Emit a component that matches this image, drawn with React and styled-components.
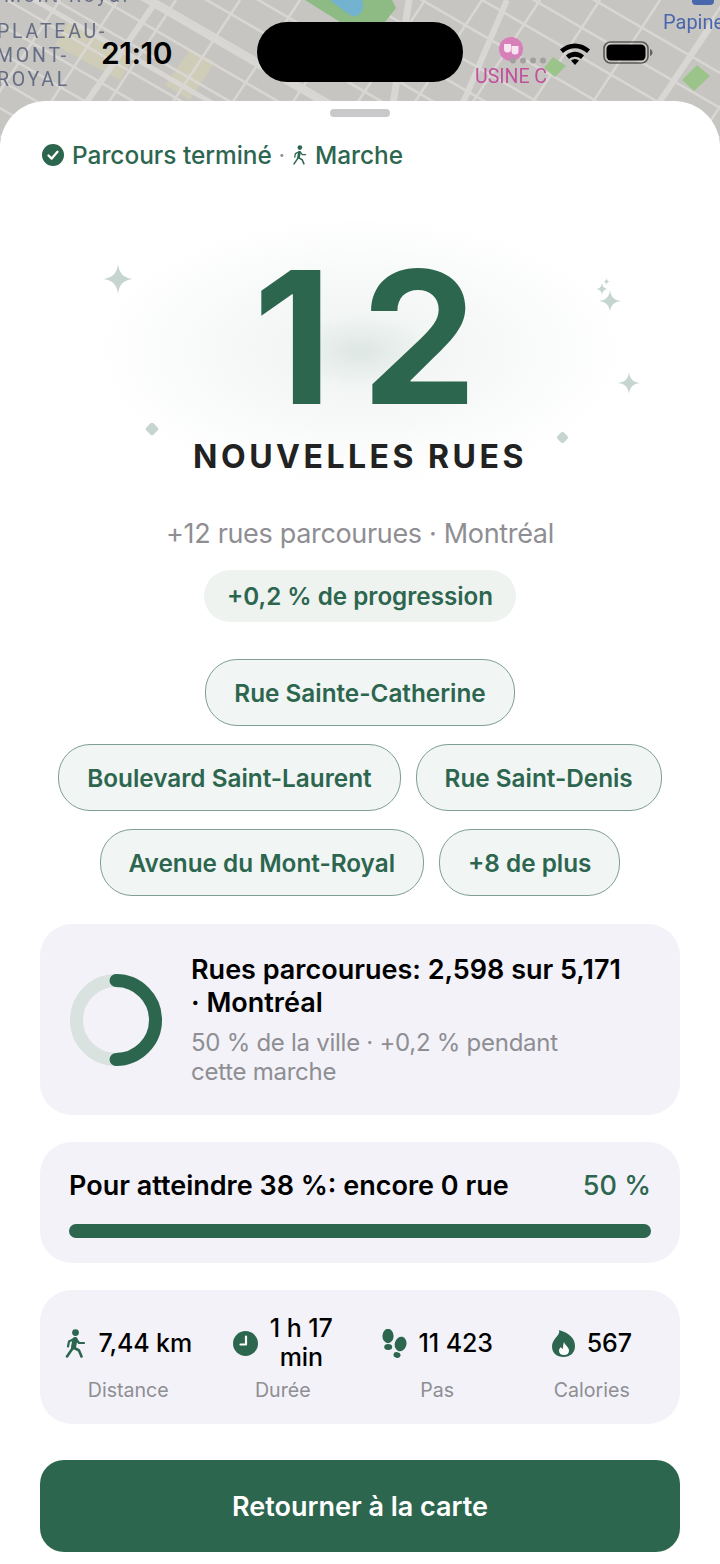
import React from "react";
import styled, { createGlobalStyle } from "styled-components";

const GREEN = "#2d664f";
const GREY = "#8e8e93";
const SPARK = "#c6d5cf";

const Global = createGlobalStyle`
  html, body {
    margin: 0;
    padding: 0;
    background: #fff;
  }
  * {
    box-sizing: border-box;
  }
`;

const Page = styled.div`
  position: relative;
  width: 720px;
  height: 1564px;
  overflow: hidden;
  font-family: Inter, "Noto Sans", sans-serif;
  background: #fff;
`;

const MapLayer = styled.svg`
  position: absolute;
  top: 0;
  left: 0;
  width: 720px;
  height: 190px;
  filter: blur(0.6px);
`;

const Island = styled.div`
  position: absolute;
  top: 22px;
  left: 257px;
  width: 206px;
  height: 60px;
  border-radius: 30px;
  background: #000;
`;

const Clock = styled.div`
  position: absolute;
  top: 35px;
  left: 101px;
  font-size: 30px;
  line-height: 36px;
  font-weight: 600;
  letter-spacing: -0.5px;
  color: #000;
`;

const StatusIcon = styled.svg`
  position: absolute;
  top: ${(p) => p.$top}px;
  left: ${(p) => p.$left}px;
`;

const Sheet = styled.div`
  position: relative;
  margin-top: 101px;
  height: 1463px;
  padding: 8px 40px 0;
  display: flex;
  flex-direction: column;
  border-radius: 46px 46px 0 0;
  background: #fff;
`;

const Handle = styled.div`
  align-self: center;
  width: 60px;
  height: 8px;
  border-radius: 4px;
  background: #c9c9cc;
`;

const Status = styled.div`
  display: flex;
  align-items: center;
  margin-top: 23px;
  height: 30px;
  padding-left: 2px;
  gap: 8px;
  font-size: 24.4px;
  font-weight: 550;
  color: ${GREEN};
`;

const Dot = styled.span`
  color: ${GREY};
  font-size: 20px;
  margin: 0 -1px;
`;

const Hero = styled.div`
  position: relative;
  margin-top: 75px;
  display: flex;
  flex-direction: column;
  align-items: center;
`;

const Glow = styled.div`
  position: absolute;
  top: -29px;
  left: 55px;
  width: 530px;
  height: 270px;
  background: radial-gradient(
    ellipse closest-side,
    rgba(45, 102, 79, 0.16) 0%,
    rgba(45, 102, 79, 0.06) 28%,
    rgba(45, 102, 79, 0.03) 62%,
    rgba(45, 102, 79, 0) 100%
  );
`;

const Spark = styled.svg`
  position: absolute;
  top: ${(p) => p.$top}px;
  left: ${(p) => p.$left}px;
`;

const Diamond = styled.div`
  position: absolute;
  top: ${(p) => p.$top}px;
  left: ${(p) => p.$left}px;
  width: ${(p) => p.$size}px;
  height: ${(p) => p.$size}px;
  border-radius: 2px;
  transform: rotate(45deg);
  background: ${SPARK};
`;

const BigNumber = styled.div`
  position: relative;
  margin-left: 39px;
  font-size: 184px;
  line-height: 184px;
  font-weight: 700;
  letter-spacing: 29px;
  color: ${GREEN};
`;

const BigLabel = styled.div`
  position: relative;
  margin-top: 8px;
  font-size: 32px;
  line-height: 40px;
  font-weight: 700;
  letter-spacing: 3.5px;
  color: #222;
`;

const Subline = styled.div`
  margin-top: 40px;
  text-align: center;
  font-size: 27px;
  line-height: 34px;
  letter-spacing: -0.33px;
  color: ${GREY};
`;

const Progress = styled.div`
  align-self: center;
  margin-top: 19px;
  height: 52px;
  padding: 0 23px;
  display: flex;
  align-items: center;
  border-radius: 26px;
  font-size: 24.2px;
  font-weight: 600;
  color: ${GREEN};
  background: #eef3f0;
`;

const Chips = styled.div`
  margin-top: 37px;
  display: flex;
  flex-wrap: wrap;
  justify-content: center;
  gap: 18px 15px;
`;

const Chip = styled.div`
  height: 67px;
  padding: 0 28px;
  display: flex;
  align-items: center;
  border: 1.5px solid #7f9f90;
  border-radius: 32px;
  font-size: 24.3px;
  font-weight: 580;
  color: ${GREEN};
  background: #f1f5f3;
`;

const Card = styled.div`
  border-radius: 32px;
  background: #f2f2f8;
`;

const CityCard = styled(Card)`
  margin-top: 28px;
  height: 191px;
  padding: 0 50px 0 30px;
  display: flex;
  align-items: center;
  gap: 29px;
`;

const Ring = styled.svg`
  flex-shrink: 0;
`;

const CityTitle = styled.div`
  font-size: 27px;
  line-height: 33px;
  font-weight: 600;
  color: #000;
`;

const CitySub = styled.div`
  margin-top: 9px;
  max-width: 400px;
  font-size: 24px;
  line-height: 29px;
  letter-spacing: -0.27px;
  color: ${GREY};
`;

const GoalCard = styled(Card)`
  margin-top: 27px;
  height: 121px;
  padding: 26px 29px 0;
`;

const GoalRow = styled.div`
  display: flex;
  justify-content: space-between;
  align-items: center;
  height: 34px;
`;

const GoalText = styled.div`
  font-size: 27px;
  font-weight: 600;
  color: #000;
`;

const GoalValue = styled.div`
  font-size: 27px;
  font-weight: 500;
  color: ${GREEN};
`;

const Bar = styled.div`
  margin-top: 22px;
  height: 14px;
  border-radius: 7px;
  background: ${GREEN};
`;

const StatsCard = styled(Card)`
  margin-top: 27px;
  height: 134px;
  padding: 24px 11px 0;
  display: grid;
  grid-template-columns: repeat(4, 1fr);
`;

const Stat = styled.div`
  display: flex;
  flex-direction: column;
  align-items: center;
`;

const StatValue = styled.div`
  height: 58px;
  display: flex;
  align-items: center;
  gap: 12px;
`;

const StatText = styled.div`
  font-size: 25px;
  line-height: 29px;
  font-weight: 550;
  letter-spacing: -0.1px;
  text-align: center;
  white-space: pre-line;
  color: #000;
`;

const StatIcon = styled.svg`
  flex-shrink: 0;
`;

const StatLabel = styled.div`
  margin-top: 5px;
  font-size: 19.6px;
  line-height: 26px;
  color: ${GREY};
`;

const ReturnButton = styled.button`
  margin-top: 36px;
  height: 92px;
  border: none;
  border-radius: 24px;
  font-family: inherit;
  font-size: 27px;
  font-weight: 600;
  color: #fff;
  background: ${GREEN};
`;

// street grid for the map behind the sheet
const minorA = [-130, -100, -72, -44, -16, 12, 40, 68, 96, 124, 152, -160, -190, -220, -250, -285, -320, -350, -385];
const minorB = [60, 118, 176, 240, 300, 360, 425, 482, 540, 600, 660, 725, 790, 850];
const STREET = "#d9d7d3";

const MapBack = () => (
  <MapLayer viewBox="0 0 720 190">
    <rect width="720" height="190" fill="#c7c5c1" />
    <polygon points="70,20 135,55 120,80 55,45" fill="#cfcdb8" />
    <polygon points="190,50 215,62 190,100 165,85" fill="#cfcdb8" />
    {minorA.map((c) => (
      <line key={c} x1="0" y1={c + 40} x2="720" y2={c + 40 + 418} stroke={STREET} strokeWidth="2.5" />
    ))}
    {minorB.map((c) => (
      <line key={c} x1={c} y1="0" x2={c - 125} y2="190" stroke={STREET} strokeWidth="2.5" />
    ))}
    <line x1="0" y1="-85" x2="720" y2="333" stroke={STREET} strokeWidth="6" />
    <line x1="0" y1="-20" x2="400" y2="212" stroke={STREET} strokeWidth="5" />
    <line x1="157" y1="0" x2="33" y2="180" stroke={STREET} strokeWidth="6" />
    <line x1="409" y1="0" x2="380" y2="190" stroke={STREET} strokeWidth="7" />
    <line x1="507" y1="0" x2="460" y2="110" stroke={STREET} strokeWidth="6" />
    <line x1="715" y1="20" x2="600" y2="190" stroke={STREET} strokeWidth="6" />
    <polygon points="553,57 566,66 555,77 544,68" fill="#9bc48a" />
    <polygon points="697,65 710,76 694,91 682,80" fill="#9bc48a" />
    <polygon points="305,0 392,0 396,8 385,22 345,25" fill="#8dbb83" />
    <path d="M330 0 C340 8 348 14 352 16 C360 18 366 8 362 0Z" fill="#74b3d0" />
    <g fontFamily="Roboto, sans-serif" fontSize="19.5" fill="#666e85" letterSpacing="2.8">
      <text x="-3" y="38">PLATEAU-</text>
      <text x="-4" y="62">MONT-</text>
      <text x="-3" y="86">ROYAL</text>
      <text x="4" y="2">Mont-Royal</text>
    </g>
    <text x="475" y="83" fontFamily="Roboto, sans-serif" fontSize="19.5" fill="#c1519c">USINE C</text>
    <text x="663" y="29" fontFamily="Roboto, sans-serif" fontSize="20" fill="#4a66ad">Papineau</text>
    <rect x="692" y="-10" width="22" height="15" rx="4" fill="#4a66ad" />
    <circle cx="511" cy="49" r="12" fill="#d67fb8" />
    <path d="M504 44h7v5a3.5 3.5 0 0 1-7 0zM511.5 46h7v5a3.5 3.5 0 0 1-7 0z" fill="#fff" opacity="0.8" />
    {[513, 523, 533, 543].map((x) => (
      <circle key={x} cx={x} cy="60.5" r="3" fill="#a3a19f" />
    ))}
  </MapLayer>
);

const Star = ({ top, left, size, color = SPARK }) => (
  <Spark $top={top} $left={left} width={size} height={size} viewBox="0 0 24 24">
    <path d="M12 0C12.8 7.5 16.5 11.2 24 12C16.5 12.8 12.8 16.5 12 24C11.2 16.5 7.5 12.8 0 12C7.5 11.2 11.2 7.5 12 0Z" fill={color} />
  </Spark>
);

const WalkIcon = ({ size = 22, height = 29, thin }) => (
  <StatIcon width={size} height={height} viewBox="0 0 22 29" fill="none" stroke={GREEN} strokeLinecap="round" strokeLinejoin="round">
    <circle cx="11.5" cy="3.6" r="3.4" fill={GREEN} stroke="none" />
    <path d="M11 10.5L9.5 18" strokeWidth={thin ? 4 : 5} />
    <path d="M9.5 18L3 27.5M10.5 19L15 21.5L17.5 27.5" strokeWidth={thin ? 2.2 : 2.6} />
    <path d="M10 10L5 12.5L4 17.5M12 10L15 14H20" strokeWidth={thin ? 1.9 : 2.2} />
  </StatIcon>
);

const ClockIcon = () => (
  <StatIcon width="25" height="25" viewBox="0 0 25 25">
    <circle cx="12.5" cy="12.5" r="12.5" fill={GREEN} />
    <path d="M13 5.5V13.5H7.5" fill="none" stroke="#fff" strokeWidth="2.2" strokeLinecap="round" strokeLinejoin="round" />
  </StatIcon>
);

const StepsIcon = () => (
  <StatIcon width="25" height="29" viewBox="0 0 25 29" fill={GREEN}>
    <ellipse cx="6" cy="7" rx="5.6" ry="7.2" />
    <ellipse cx="6.2" cy="18" rx="4" ry="3" />
    <ellipse cx="18.6" cy="15" rx="5.8" ry="7.4" transform="rotate(14 18.6 15)" />
    <ellipse cx="15" cy="26" rx="3.6" ry="2.8" transform="rotate(14 15 26)" />
  </StatIcon>
);

const FlameIcon = () => (
  <StatIcon width="23" height="27" viewBox="0 0 23 27">
    <path d="M7 0C8 3 6 5 3.5 8C1.5 10.5 0 13 0 16.5C0 23 5 27 11.5 27C18 27 23 23 23 16C23 9.5 19 3.5 7 0Z" fill={GREEN} />
    <path d="M12 12C13 15.5 17 17 17 20.5C17 23.5 15 25 12 25C9 25 7 23.5 7 20.5C7 19 8 18 9 17C9.5 18 10 18.5 11 19C11 17 11 15 12 12Z" fill="#fff" />
  </StatIcon>
);

const CheckIcon = () => (
  <svg width="22" height="22" viewBox="0 0 22 22">
    <circle cx="11" cy="11" r="11" fill={GREEN} />
    <path d="M6.5 11.5L9.7 14.6L15.5 7.8" fill="none" stroke="#fff" strokeWidth="2.3" strokeLinecap="round" strokeLinejoin="round" />
  </svg>
);

const stats = [
  { icon: <WalkIcon />, value: "7,44 km", label: "Distance" },
  { icon: <ClockIcon />, value: "1 h 17\nmin", label: "Durée" },
  { icon: <StepsIcon />, value: "11 423", label: "Pas" },
  { icon: <FlameIcon />, value: "567", label: "Calories" },
];

const chips = [
  "Rue Sainte-Catherine",
  "Boulevard Saint-Laurent",
  "Rue Saint-Denis",
  "Avenue du Mont-Royal",
  "+8 de plus",
];

export default function App() {
  return (
    <Page>
      <Global />
      <MapBack />
      <Clock>21:10</Clock>
      <Island />
      <StatusIcon $top={41} $left={559} width="32" height="24" viewBox="0 0 32 24">
        <path d="M1 8.5C9.5 0.5 22.5 0.5 31 8.5L28 12C21 5.5 11 5.5 4 12Z" fill="#000" />
        <path d="M7 14.5C12.5 9.5 19.5 9.5 25 14.5L22 18C18.5 15 13.5 15 10 18Z" fill="#000" />
        <path d="M12 19.5C14.5 17.5 17.5 17.5 20 19.5L16 24Z" fill="#000" />
      </StatusIcon>
      <StatusIcon $top={41} $left={603} width="50" height="23" viewBox="0 0 50 23">
        <rect x="1" y="1" width="44" height="21" rx="6.5" fill="none" stroke="#000" strokeOpacity="0.55" strokeWidth="1.6" />
        <rect x="3.5" y="3.5" width="39" height="16" rx="4.5" fill="#000" />
        <path d="M47 8C48.6 8.6 49.5 10 49.5 11.5C49.5 13 48.6 14.4 47 15Z" fill="#000" fillOpacity="0.5" />
      </StatusIcon>

      <Sheet>
        <Handle />
        <Status>
          <CheckIcon />
          Parcours terminé
          <Dot>·</Dot>
          <WalkIcon size={15} height={22} thin />
          Marche
        </Status>

        <Hero>
          <Glow />
          <Star top={19} left={63} size={30} />
          <Star top={45} left={559} size={22} />
          <Star top={38} left={556} size={12} />
          <Star top={33} left={563} size={7} />
          <Star top={127} left={578} size={22} />
          <Diamond $top={179} $left={107} $size={10} />
          <Diamond $top={188} $left={518} $size={9} />
          <BigNumber>12</BigNumber>
          <BigLabel>NOUVELLES RUES</BigLabel>
        </Hero>

        <Subline>+12 rues parcourues · Montréal</Subline>
        <Progress>+0,2 % de progression</Progress>

        <Chips>
          {chips.map((c) => (
            <Chip key={c}>{c}</Chip>
          ))}
        </Chips>

        <CityCard>
          <Ring width="92" height="92" viewBox="0 0 92 92" fill="none" strokeWidth="13">
            <circle cx="46" cy="46" r="39.5" stroke="#d9e2df" />
            <path d="M46 6.5A39.5 39.5 0 0 1 46 85.5" stroke={GREEN} strokeLinecap="round" />
          </Ring>
          <div>
            <CityTitle>Rues parcourues: 2,598 sur 5,171 · Montréal</CityTitle>
            <CitySub>50 % de la ville · +0,2 % pendant cette marche</CitySub>
          </div>
        </CityCard>

        <GoalCard>
          <GoalRow>
            <GoalText>Pour atteindre 38 %: encore 0 rue</GoalText>
            <GoalValue>50 %</GoalValue>
          </GoalRow>
          <Bar />
        </GoalCard>

        <StatsCard>
          {stats.map((s) => (
            <Stat key={s.label}>
              <StatValue>
                {s.icon}
                <StatText>{s.value}</StatText>
              </StatValue>
              <StatLabel>{s.label}</StatLabel>
            </Stat>
          ))}
        </StatsCard>

        <ReturnButton>Retourner à la carte</ReturnButton>
      </Sheet>
    </Page>
  );
}
